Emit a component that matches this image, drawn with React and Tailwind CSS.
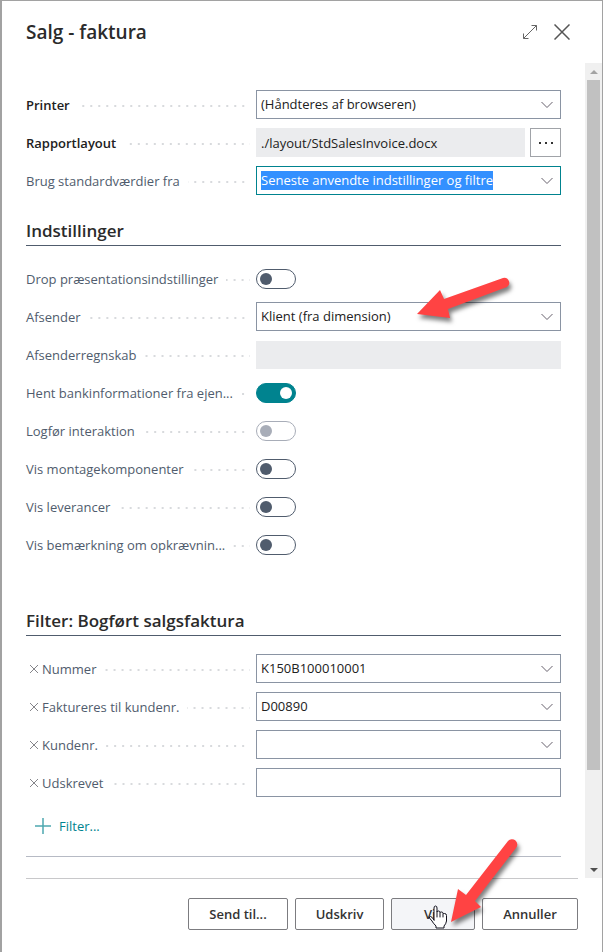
import { useState } from "react";

const reportOptions = [
  { label: "Drop præsentationsindstillinger", type: "toggle" },
  { label: "Afsender", type: "select", value: "Klient (fra dimension)", arrow: true },
  { label: "Afsenderregnskab", type: "readonly", value: "" },
  { label: "Hent bankinformationer fra ejen...", type: "toggle", on: true },
  { label: "Logfør interaktion", type: "toggle", disabled: true },
  { label: "Vis montagekomponenter", type: "toggle" },
  { label: "Vis leverancer", type: "toggle" },
  { label: "Vis bemærkning om opkrævnin...", type: "toggle" },
];

const filters = [
  { label: "Nummer", type: "select", value: "K150B100010001" },
  { label: "Faktureres til kundenr.", type: "select", value: "D00890" },
  { label: "Kundenr.", type: "select", value: "" },
  { label: "Udskrevet", type: "text", value: "" },
];

function Chevron() {
  return (
    <svg
      className="pointer-events-none absolute right-[7px] top-[10px] h-2 w-3"
      viewBox="0 0 12 8"
      fill="none"
      stroke="#66606c"
    >
      <path d="M0.5 1 L6 6.5 L11.5 1" />
    </svg>
  );
}

function Row({ id, label, bold, onRemove, children }) {
  return (
    <div className="flex h-[29px] items-center">
      <div className="flex h-full w-[224px] shrink-0 items-center">
        {onRemove && (
          <button type="button" aria-label={`Fjern ${label}`} onClick={onRemove} className="ml-1 mr-1 shrink-0">
            <svg className="h-2 w-2" viewBox="0 0 8 8" stroke="#85858a" fill="none">
              <path d="M0 0 L8 8 M8 0 L0 8" />
            </svg>
          </button>
        )}
        <label
          htmlFor={id}
          className={
            bold
              ? "whitespace-nowrap text-[13px] font-semibold leading-5 text-[#212121]"
              : "whitespace-nowrap text-[13px] leading-5 text-[#505c6d]"
          }
        >
          {label}
        </label>
        <span className="ml-2 mt-[3px] h-[2px] flex-1 bg-[linear-gradient(90deg,#d8dadd_2px,transparent_2px)] bg-[length:8px_2px] bg-right" />
      </div>
      <div className="ml-[6px] flex min-w-0 flex-1 gap-[5px]">{children}</div>
    </div>
  );
}

function SelectField({ id, value, focused }) {
  return (
    <div
      className={
        focused
          ? "relative flex h-[29px] w-full items-center border border-[#00838f] px-1"
          : "relative flex h-[29px] w-full items-center border border-[#8a94a3] px-1"
      }
    >
      <select
        id={id}
        defaultValue={value}
        className={
          focused
            ? "h-[19px] appearance-none bg-[#3390ff] text-[13px] leading-[19px] text-white outline-none [field-sizing:content]"
            : "h-full w-full appearance-none bg-transparent text-[13px] text-[#212121] outline-none"
        }
      >
        <option>{value}</option>
      </select>
      <Chevron />
    </div>
  );
}

function Toggle({ id, on, disabled }) {
  const [checked, setChecked] = useState(!!on);
  return (
    <input
      id={id}
      type="checkbox"
      role="switch"
      checked={checked}
      disabled={disabled}
      onChange={(e) => setChecked(e.target.checked)}
      className="flex h-5 w-10 appearance-none items-center rounded-full border border-[#505c6d] px-[3px] before:h-3 before:w-3 before:rounded-full before:bg-[#505c6d] checked:justify-end checked:border-[#00838f] checked:bg-[#00838f] checked:before:bg-white disabled:border-[#a8adb8] disabled:before:bg-[#a8adb8]"
    />
  );
}

function Field({ id, field }) {
  if (field.type === "toggle") return <Toggle id={id} on={field.on} disabled={field.disabled} />;
  if (field.type === "select") return <SelectField id={id} value={field.value} />;
  if (field.type === "readonly") {
    return <input id={id} readOnly value={field.value} className="h-[28px] w-full bg-[#ebecee] px-1 text-[13px]" />;
  }
  return (
    <input
      id={id}
      defaultValue={field.value}
      className="h-[29px] w-full border border-[#8a94a3] px-1 text-[13px] text-[#212121] outline-none"
    />
  );
}

function SectionTitle({ children }) {
  return (
    <h2 className="border-b border-[#505c6d] pb-[2px] text-[17px] font-semibold leading-6 text-[#2b2b2b]">{children}</h2>
  );
}

function FieldArrow() {
  return (
    <svg
      className="pointer-events-none absolute -top-7 left-[155px] z-10 h-14 w-[108px] drop-shadow-[2px_4px_2px_rgba(0,0,0,0.5)]"
      viewBox="0 0 108 56"
      fill="#ff4343"
    >
      <path d="M6 40 L29 16 L33 25 L92 4 A5 5 0 0 1 96 13 L37 35 L39 44 Z" />
    </svg>
  );
}

function ButtonArrow() {
  return (
    <svg
      className="pointer-events-none absolute -top-[65px] left-[54px] z-20 h-[100px] w-[80px] drop-shadow-[2px_4px_2px_rgba(0,0,0,0.5)]"
      viewBox="0 0 80 100"
      fill="#ff4343"
    >
      <path d="M6 89 L13 56 L21 62 L63 8 A5 5 0 0 1 71 15 L30 68 L36 74 Z" />
    </svg>
  );
}

function HandPointer() {
  return (
    <svg
      className="pointer-events-none absolute left-[37px] top-[7px] z-10 h-6 w-5"
      viewBox="0 0 20 24"
      fill="#fff"
      stroke="#10101c"
      strokeLinejoin="round"
      strokeLinecap="round"
    >
      <path d="M6 15 V3 Q6 1 7.5 1 Q9 1 9 3 V7 Q9 6 10.500 6 Q12 6 12 7.5 Q12 7 13.500 7 Q15 7 15 8.500 Q15 8.500 16.500 8.500 Q18.500 8.500 18.500 10.500 V16 Q18 19 16 21 V23 H8 V21 Q5 18 4 16 L1.500 13 Q1 11.500 2.500 11.500 Q4 11.500 6 15 Z" />
      <path d="M9 7 V12 M12 8 V12 M15 9 V12" fill="none" />
    </svg>
  );
}

const footerButton =
  "h-8 rounded-[2px] border border-[#7c7c80] text-[13px] font-semibold leading-5 text-[#333]";

export default function App() {
  const [activeFilters, setActiveFilters] = useState(filters);

  return (
    <div className="flex min-h-screen flex-col overflow-hidden bg-[#a2a2a2] pl-[2px] pr-px pt-px font-['Open_Sans','Noto_Sans',sans-serif]">
      <main role="dialog" aria-label="Salg - faktura" className="flex flex-1 flex-col bg-white">
        <header className="flex h-[62px] items-center justify-between pl-6 pr-8">
          <h1 className="text-[19px] font-semibold leading-7 text-[#2b2b2b]">Salg - faktura</h1>
          <div className="flex items-center gap-4">
            <button type="button" aria-label="Udvid">
              <svg className="h-4 w-4" viewBox="0 0 16 16" fill="none" stroke="#666">
                <path d="M1.500 14.500 L14.500 1.500 M9.500 1.500 H14.500 V6.500 M1.500 9.500 V14.500 H6.500" />
              </svg>
            </button>
            <button type="button" aria-label="Luk">
              <svg className="h-4 w-4" viewBox="0 0 16 16" fill="none" stroke="#555" strokeWidth="1.500">
                <path d="M0.500 0.500 L15.500 15.500 M15.500 0.500 L0.500 15.500" />
              </svg>
            </button>
          </div>
        </header>

        <div className="flex">
          <form className="min-w-0 flex-1 pb-[21px] pl-6 pr-6 pt-[27px]">
            <div className="flex flex-col gap-[9px]">
              <Row id="printer" label="Printer" bold>
                <SelectField id="printer" value="(Håndteres af browseren)" />
              </Row>
              <Row id="layout" label="Rapportlayout" bold>
                <input
                  id="layout"
                  readOnly
                  value="./layout/StdSalesInvoice.docx"
                  className="h-[29px] min-w-0 flex-1 bg-[#ebecee] px-[5px] text-[13px] text-[#212121] outline-none"
                />
                <button
                  type="button"
                  aria-label="Vælg layout"
                  className="flex h-[29px] w-[31px] items-center justify-center border border-[#a0a3a8]"
                >
                  <svg className="h-[2px] w-[14px]" viewBox="0 0 14 2" fill="#333">
                    <path d="M0 0h2v2H0z M6 0h2v2H6z M12 0h2v2h-2z" />
                  </svg>
                </button>
              </Row>
              <Row id="defaults" label="Brug standardværdier fra">
                <SelectField id="defaults" value="Seneste anvendte indstillinger og filtre" focused />
              </Row>
            </div>

            <section className="mt-6">
              <SectionTitle>Indstillinger</SectionTitle>
              <div className="mt-[18px] flex flex-col gap-[9px]">
                {reportOptions.map((field, i) => (
                  <Row key={field.label} id={`option-${i}`} label={field.label}>
                    <div className="relative flex w-full">
                      <Field id={`option-${i}`} field={field} />
                      {field.arrow && <FieldArrow />}
                    </div>
                  </Row>
                ))}
              </div>
            </section>

            <section className="mt-[50px]">
              <SectionTitle>Filter: Bogført salgsfaktura</SectionTitle>
              <div className="mt-[18px] flex flex-col gap-[9px]">
                {activeFilters.map((field, i) => (
                  <Row
                    key={field.label}
                    id={`filter-${i}`}
                    label={field.label}
                    onRemove={() => setActiveFilters(activeFilters.filter((f) => f !== field))}
                  >
                    <Field id={`filter-${i}`} field={field} />
                  </Row>
                ))}
              </div>
              <button
                type="button"
                className="ml-[9px] mt-[19px] flex items-center gap-2 text-[13px] leading-5 text-[#00838f]"
              >
                <svg className="h-4 w-4" viewBox="0 0 16 16" fill="none" stroke="#4da8b0" strokeWidth="1.500">
                  <path d="M8 0 V16 M0 8 H16" />
                </svg>
                Filter...
              </button>
              <hr className="mt-5 border-[#b6bac4]" />
            </section>
          </form>

          {/* Scrollbar */}
          <div className="flex w-[17px] flex-col bg-[#f0f0f0]" aria-hidden="true">
            <div className="flex h-[17px] items-center justify-center">
              <svg className="h-1 w-2" viewBox="0 0 8 4" fill="#a3a3a3">
                <path d="M4 0 L8 4 H0 Z" />
              </svg>
            </div>
            <div className="mx-[2px] flex-[690] bg-[#c1c1c1]" />
            <div className="flex-[91]" />
            <div className="flex h-[17px] items-center justify-center">
              <svg className="h-1 w-2" viewBox="0 0 8 4" fill="#505050">
                <path d="M0 0 H8 L4 4 Z" />
              </svg>
            </div>
          </div>
        </div>

        <footer className="ml-6 mr-6 flex justify-end gap-[7px] border-t border-[#c8c8ca] pt-[19px]">
          <button type="button" className={`${footerButton} w-[100px]`}>
            Send til...
          </button>
          <button type="button" className={`${footerButton} w-[89px]`}>
            Udskriv
          </button>
          <div className="relative">
            <button type="button" className={`${footerButton} w-[84px] bg-[#f4f5f8]`}>
              Vis
            </button>
            <HandPointer />
            <ButtonArrow />
          </div>
          <button type="button" className={`${footerButton} w-[96px]`}>
            Annuller
          </button>
        </footer>
      </main>
    </div>
  );
}
